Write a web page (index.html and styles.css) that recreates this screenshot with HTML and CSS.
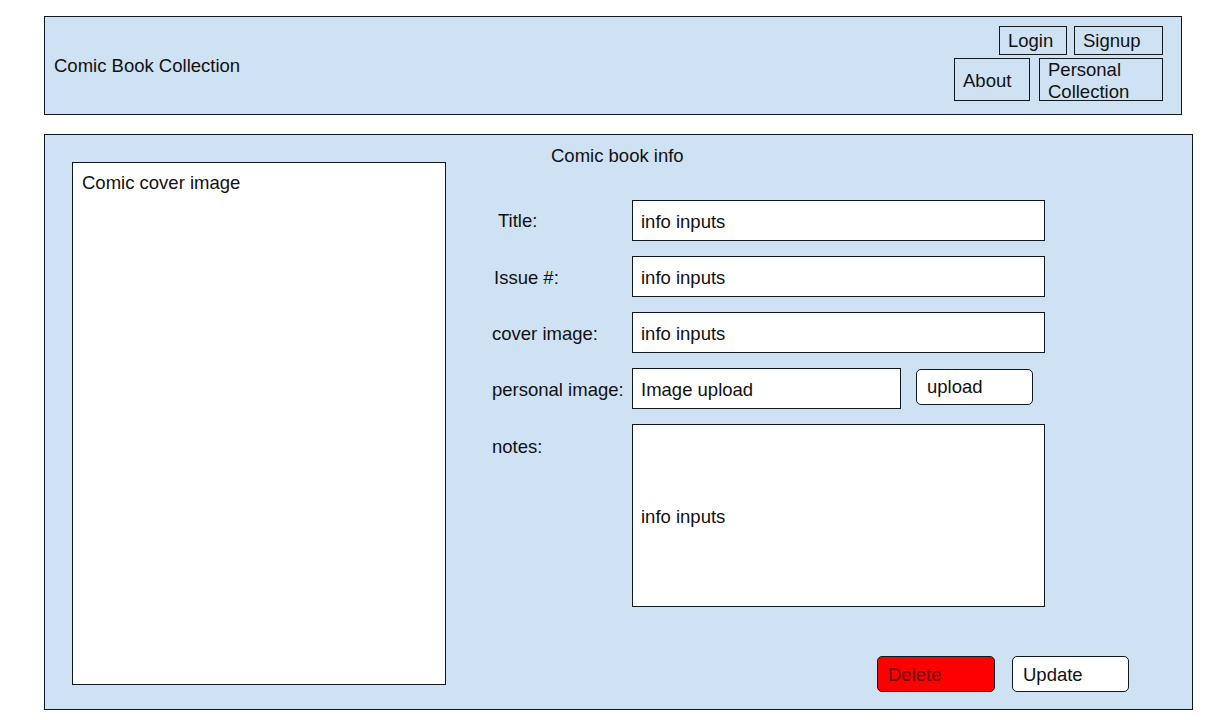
FILE: index.html
```html
<!DOCTYPE html>
<html>
<head>
<meta charset="utf-8">
<title>Comic Book Collection</title>
<link rel="stylesheet" href="styles.css">
</head>
<body>
<div class="page">
  <header class="header">
    <div class="brand">Comic Book Collection</div>
    <nav class="nav">
      <div class="nav-row nav-row-top">
        <div class="nav-btn login">Login</div>
        <div class="nav-btn signup">Signup</div>
      </div>
      <div class="nav-row nav-row-bottom">
        <div class="nav-btn about">About</div>
        <div class="nav-btn personal">Personal<br>Collection</div>
      </div>
    </nav>
  </header>
  <main class="main">
    <div class="cover">Comic cover image</div>
    <section class="info">
      <div class="info-title">Comic book info</div>
      <div class="form">
        <div class="row">
          <div class="label label-title">Title:</div>
          <div class="field">info inputs</div>
        </div>
        <div class="row">
          <div class="label label-issue">Issue #:</div>
          <div class="field">info inputs</div>
        </div>
        <div class="row">
          <div class="label">cover image:</div>
          <div class="field">info inputs</div>
        </div>
        <div class="row">
          <div class="label">personal image:</div>
          <div class="field field-short">Image upload</div>
          <div class="btn upload">upload</div>
        </div>
        <div class="row row-notes">
          <div class="label">notes:</div>
          <div class="field field-notes">info inputs</div>
        </div>
      </div>
      <div class="actions">
        <div class="btn delete">Delete</div>
        <div class="btn update">Update</div>
      </div>
    </section>
  </main>
</div>
</body>
</html>
```

FILE: styles.css
```css
* {
  box-sizing: border-box;
}

html, body {
  margin: 0;
  padding: 0;
  background: #ffffff;
}

body {
  font-family: "Liberation Sans", Arial, sans-serif;
  font-size: 18.5px;
  line-height: 21px;
  color: #111111;
}

.page {
  padding: 16px 0 0 44px;
}

.header {
  width: 1138px;
  height: 99px;
  background: #cfe2f3;
  border: 1px solid #101820;
  display: flex;
  align-items: center;
  justify-content: space-between;
  padding: 0 18px 0 9px;
}

.brand {
  margin-top: 0;
}

.nav {
  align-self: flex-start;
  padding-top: 9px;
  display: flex;
  flex-direction: column;
  align-items: flex-end;
  gap: 3px;
}

.nav-row {
  display: flex;
}

.nav-row-top {
  gap: 7px;
}

.nav-row-bottom {
  gap: 9px;
}

.nav-btn {
  border: 1px solid #101820;
  padding-left: 8px;
  display: flex;
  align-items: center;
}

.login {
  width: 68px;
  height: 29px;
}

.signup {
  width: 89px;
  height: 29px;
}

.about {
  width: 76px;
  height: 43px;
  padding-top: 2px;
}

.personal {
  width: 124px;
  height: 43px;
  line-height: 22px;
  padding-top: 2px;
}

.main {
  margin-top: 19px;
  width: 1149px;
  height: 576px;
  background: #cfe2f3;
  border: 1px solid #101820;
  display: flex;
  align-items: flex-start;
}

.cover {
  margin: 27px 0 0 27px;
  width: 374px;
  height: 523px;
  background: #ffffff;
  border: 1px solid #101820;
  padding: 9px 0 0 9px;
}

.info {
  margin-left: 46px;
  padding-top: 10px;
  width: 640px;
}

.info-title {
  padding-left: 59px;
}

.form {
  margin-top: 34px;
  display: flex;
  flex-direction: column;
  gap: 15px;
}

.row {
  display: flex;
  align-items: flex-start;
}

.label {
  width: 140px;
  height: 41px;
  display: flex;
  align-items: center;
  padding-top: 1px;
}

.label-title {
  padding-left: 6px;
  padding-top: 0;
}

.label-issue {
  padding-left: 2px;
}

.row-notes .label {
  padding-top: 4px;
}

.field {
  width: 413px;
  height: 41px;
  background: #ffffff;
  border: 1px solid #101820;
  padding-left: 8px;
  display: flex;
  align-items: center;
  padding-top: 1px;
}

.field-short {
  width: 269px;
}

.field-notes {
  height: 183px;
}

.btn {
  height: 36px;
  border: 1px solid #101820;
  border-radius: 5px;
  padding-left: 10px;
  display: flex;
  align-items: center;
}

.upload {
  margin-left: 15px;
  margin-top: 1px;
  width: 117px;
  background: #ffffff;
  padding-bottom: 1px;
}

.actions {
  margin-top: 49px;
  margin-left: 385px;
  display: flex;
  gap: 17px;
}

.delete {
  width: 118px;
  background: #ff0000;
  color: #6a0000;
}

.update {
  width: 117px;
  background: #ffffff;
}
```
